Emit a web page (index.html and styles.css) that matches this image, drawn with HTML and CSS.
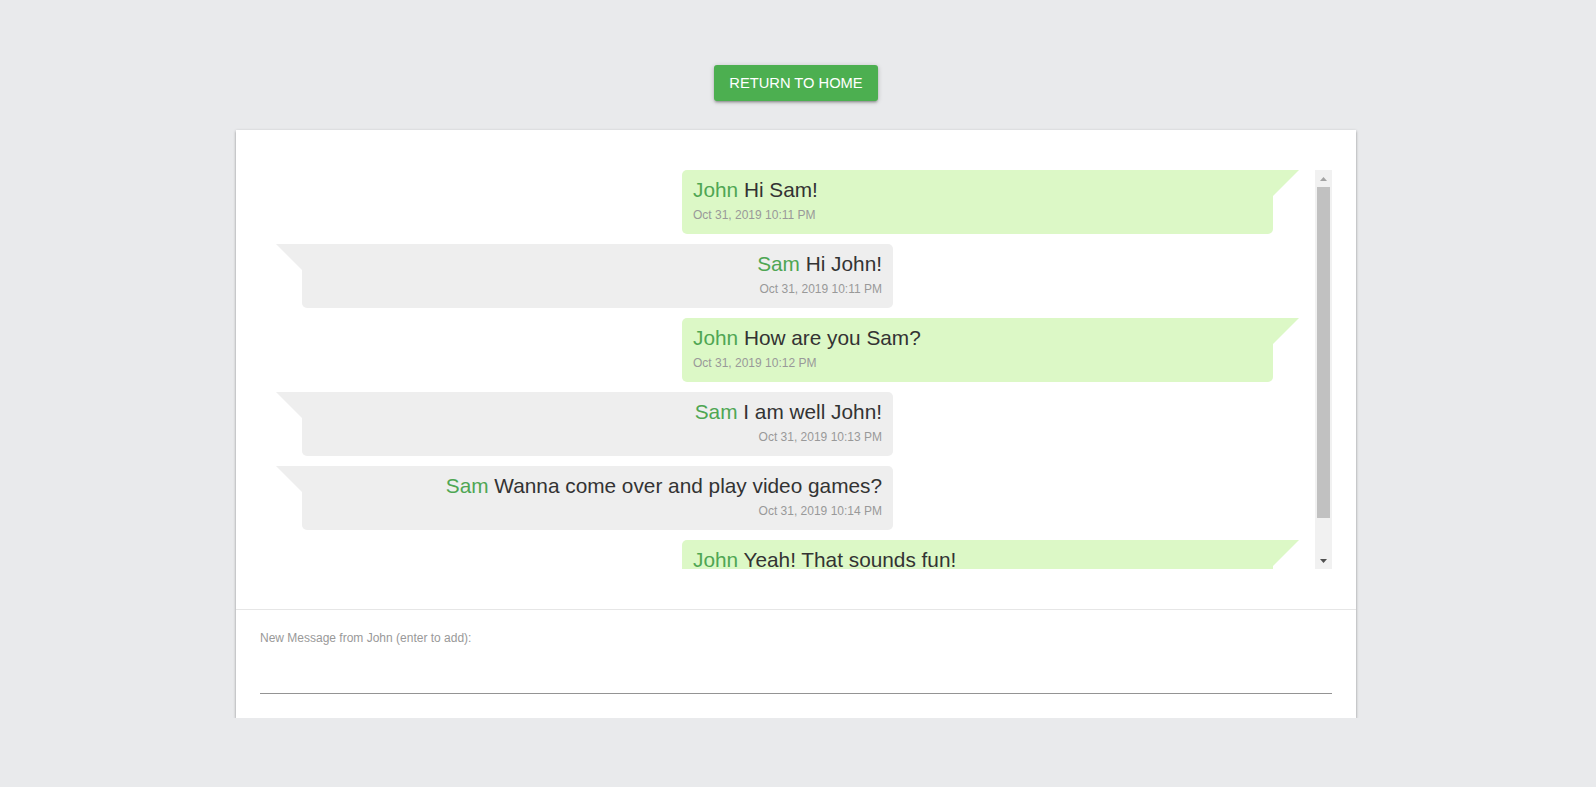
FILE: index.html
```html
<!DOCTYPE html>
<html lang="en">
<head>
<meta charset="utf-8">
<title>Chat</title>
<link rel="stylesheet" href="styles.css">
</head>
<body>
<div class="page">
  <div class="top">
    <button class="home-btn" type="button">Return to Home</button>
  </div>
  <div class="card">
    <div class="chat">
      <div class="messages">
        <div class="msg mine">
          <div class="line"><span class="name">John</span> Hi Sam!</div>
          <div class="time">Oct 31, 2019 10:11 PM</div>
        </div>
        <div class="msg theirs">
          <div class="line"><span class="name">Sam</span> Hi John!</div>
          <div class="time">Oct 31, 2019 10:11 PM</div>
        </div>
        <div class="msg mine">
          <div class="line"><span class="name">John</span> How are you Sam?</div>
          <div class="time">Oct 31, 2019 10:12 PM</div>
        </div>
        <div class="msg theirs">
          <div class="line"><span class="name">Sam</span> I am well John!</div>
          <div class="time">Oct 31, 2019 10:13 PM</div>
        </div>
        <div class="msg theirs">
          <div class="line"><span class="name">Sam</span> Wanna come over and play video games?</div>
          <div class="time">Oct 31, 2019 10:14 PM</div>
        </div>
        <div class="msg mine">
          <div class="line"><span class="name">John</span> Yeah! That sounds fun!</div>
          <div class="time">Oct 31, 2019 10:15 PM</div>
        </div>
      </div>
      <div class="scrollbar">
        <div class="sb-btn">
          <svg class="sb-arrow up" width="7" height="4" viewBox="0 0 7 4"><polygon points="0,4 7,4 3.5,0"/></svg>
        </div>
        <div class="sb-thumb"></div>
        <div class="sb-space"></div>
        <div class="sb-btn">
          <svg class="sb-arrow down" width="7" height="4" viewBox="0 0 7 4"><polygon points="0,0 7,0 3.5,4"/></svg>
        </div>
      </div>
    </div>
    <div class="composer">
      <label class="label" for="newmsg">New Message from John (enter to add):</label>
      <input class="input" id="newmsg" type="text">
    </div>
  </div>
</div>
</body>
</html>
```

FILE: styles.css
```css
html, body {
  margin: 0;
  padding: 0;
}

body {
  background: #e9eaec;
  font-family: "Liberation Sans", Arial, sans-serif;
}

.page {
  display: flex;
  flex-direction: column;
  align-items: center;
  padding: 65px 4px 0 0;
}

.top {
  display: flex;
  justify-content: center;
}

.home-btn {
  height: 36px;
  padding: 0 15px;
  background: #4caf50;
  color: #ffffff;
  border: 0;
  border-radius: 3px;
  font-family: "Liberation Sans", Arial, sans-serif;
  font-size: 14.7px;
  text-transform: uppercase;
  cursor: pointer;
  box-shadow: 0 1px 5px rgba(0, 0, 0, 0.2), 0 2px 2px rgba(0, 0, 0, 0.14), 0 3px 1px -2px rgba(0, 0, 0, 0.12);
}

.card {
  margin-top: 29px;
  width: 1120px;
  background: #ffffff;
  box-shadow: 0 1px 3px rgba(0, 0, 0, 0.25), 0 2px 2px rgba(0, 0, 0, 0.18), 0 2px 1px -1px rgba(0, 0, 0, 0.14);
}

.chat {
  display: flex;
  height: 399px;
  padding: 40px 24px;
}

.messages {
  flex: 1;
  overflow: hidden;
  padding: 0 16px;
  display: flex;
  flex-direction: column;
  gap: 10px;
}

.msg {
  position: relative;
  flex-shrink: 0;
  width: 591px;
  box-sizing: border-box;
  padding: 8px 11px 12px;
}

.mine {
  align-self: flex-end;
  margin-right: 26px;
  background: #dcf8c6;
  border-radius: 5px 0 5px 5px;
  text-align: left;
}

.mine::after {
  content: "";
  position: absolute;
  top: 0;
  right: -26px;
  border-top: 26px solid #dcf8c6;
  border-right: 26px solid transparent;
}

.theirs {
  align-self: flex-start;
  margin-left: 26px;
  background: #eeeeee;
  border-radius: 0 5px 5px 5px;
  text-align: right;
}

.theirs::before {
  content: "";
  position: absolute;
  top: 0;
  left: -26px;
  border-top: 26px solid #eeeeee;
  border-left: 26px solid transparent;
}

.line {
  font-size: 20.8px;
  line-height: 24px;
  color: #333333;
}

.name {
  color: #4fa653;
}

.time {
  margin-top: 6px;
  font-size: 12px;
  line-height: 14px;
  color: #999999;
}

.scrollbar {
  width: 17px;
  flex-shrink: 0;
  background: #f1f1f1;
  display: flex;
  flex-direction: column;
}

.sb-btn {
  height: 17px;
  display: flex;
  align-items: center;
  justify-content: center;
}

.sb-arrow.up {
  fill: #a3a3a3;
}

.sb-arrow.down {
  fill: #505050;
}

.sb-thumb {
  height: 331px;
  margin: 0 2px;
  background: #c1c1c1;
}

.sb-space {
  flex: 1;
}

.composer {
  border-top: 1px solid #e6e6e6;
  padding: 21px 24px 24px;
}

.label {
  display: block;
  font-size: 12px;
  line-height: 14px;
  color: #999999;
}

.input {
  display: block;
  width: 100%;
  height: 49px;
  box-sizing: border-box;
  padding: 0;
  border: 0;
  border-bottom: 1px solid #949494;
  outline: none;
  background: transparent;
  font-family: "Liberation Sans", Arial, sans-serif;
  font-size: 16px;
  color: #333333;
}
```
